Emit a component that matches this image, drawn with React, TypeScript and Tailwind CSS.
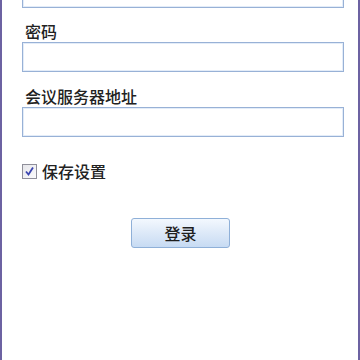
import { useState } from 'react';

const font = { fontFamily: '"Noto Sans CJK SC", "Noto Sans", sans-serif' };

function Field({ className = '' }: { className?: string }) {
  return (
    <div
      className={`ml-[20px] h-[30px] w-[322px] border border-[#98b1d6] bg-white shadow-[inset_0_0_0_1px_#e3ecf8] ${className}`}
    />
  );
}

export default function App() {
  const [save, setSave] = useState(true);

  return (
    <div
      className="h-[360px] w-[360px] overflow-hidden border-x-2 border-[#6c62a2] bg-white text-[16px] font-medium text-[#222]"
      style={font}
    >
      <div className="flex flex-col">
        <Field className="-mt-[22px]" />
        <div className="ml-[23px] mt-[12px] h-[22px] leading-[22px]">密码</div>
        <Field className="mt-[0px]" />
        <div className="ml-[23px] mt-[13px] h-[22px] leading-[22px]">会议服务器地址</div>
        <Field className="mt-[0px]" />

        <label className="ml-[20px] mt-[25px] flex h-[18px] cursor-pointer items-center gap-[5px]">
          <span
            onClick={() => setSave(!save)}
            className="flex h-[15px] w-[15px] items-center justify-center border border-[#8f8f9a] bg-gradient-to-br from-[#e6e6ea] to-[#fbfbfd]"
          >
            {save && (
              <svg width="11" height="11" viewBox="0 0 11 11">
                <path d="M2 5.5 L4.5 8.5 L9 1.5" fill="none" stroke="#3a44b0" strokeWidth="1.8" />
              </svg>
            )}
          </span>
          <span className="text-[16px] leading-[18px]">保存设置</span>
        </label>

        <div className="mt-[38px] flex justify-center pl-[1px]">
          <button className="h-[30px] w-[99px] rounded-[3px] border border-[#8fb0d8] bg-gradient-to-b from-[#f3f8fe] via-[#dde9f8] to-[#c7dbf3] text-[16px] font-medium text-[#1e1e1e]">
            登录
          </button>
        </div>
      </div>
    </div>
  );
}
